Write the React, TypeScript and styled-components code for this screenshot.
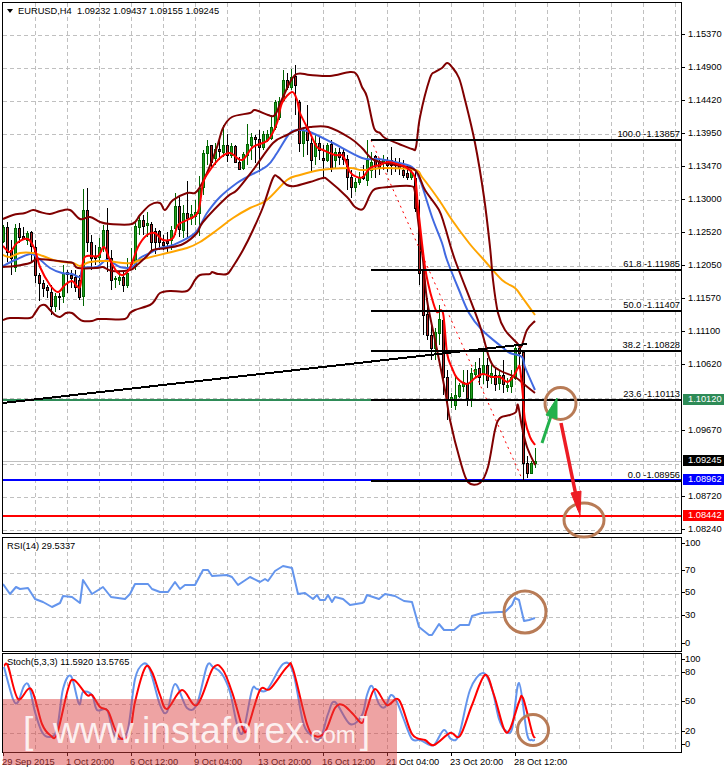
import React from "react";
import styled, { createGlobalStyle } from "styled-components";

type Pt = [number, number];
// x, high, low, body top, body bottom, bull
type Candle = [number, number, number, number, number, number];

const GlobalStyle = createGlobalStyle`
    html, body {
        margin: 0;
        padding: 0;
        background: #fff;
    }
    body {
        font-family: "Liberation Sans", Arial, sans-serif;
        font-size: 9.3px;
        color: #000;
    }
`;

const Page = styled.div`
    position: relative;
    width: 724px;
    height: 768px;
    padding: 2px 0 0 2px;
    box-sizing: border-box;
    overflow: hidden;
    background: #fff;
`;

const PaneRow = styled.div<{ $gap?: number }>`
    display: flex;
    margin-top: ${(p) => p.$gap ?? 0}px;
`;

const Pane = styled.div<{ $h: number }>`
    position: relative;
    width: 678px;
    height: ${(p) => p.$h}px;
    border: 1px solid #000;
    flex: none;
`;

const Plot = styled.svg`
    display: block;
    width: 100%;
    height: 100%;
`;

const Axis = styled.div`
    display: flex;
    flex-direction: column;
    flex: none;
`;

const Tick = styled.div<{ $gap: number; $tight?: boolean }>`
    display: flex;
    align-items: center;
    gap: ${(p) => (p.$tight ? 0 : 3)}px;
    height: 13px;
    margin-top: ${(p) => p.$gap}px;
    line-height: 13px;
    &::before {
        content: "";
        width: 3px;
        height: 1px;
        background: #000;
    }
`;

const Legend = styled.div`
    position: absolute;
    top: 1px;
    left: 4px;
    display: flex;
    align-items: center;
    gap: 4px;
    height: 13px;
    white-space: pre;
`;

const Caret = styled.span`
    width: 0;
    height: 0;
    border-left: 3.5px solid transparent;
    border-right: 3.5px solid transparent;
    border-top: 4px solid #000;
    margin-right: 1px;
`;

const PaneLabel = styled.div`
    position: absolute;
    top: 3px;
    left: 4px;
    white-space: pre;
`;

const FibLabel = styled.div<{ $y: number }>`
    position: absolute;
    right: 1px;
    top: ${(p) => p.$y - 3 - 11}px;
    line-height: 11px;
    white-space: pre;
`;

const PriceTag = styled.div<{ $y: number; $bg: string }>`
    position: absolute;
    left: 683px;
    top: ${(p) => p.$y - 6}px;
    width: 41px;
    height: 11px;
    padding-left: 5px;
    box-sizing: border-box;
    line-height: 11px;
    color: #fff;
    background: ${(p) => p.$bg};
`;

const TimeAxis = styled.div`
    display: flex;
`;

const TimeCell = styled.div`
    position: relative;
    width: 64px;
    flex: none;
    padding-top: 3px;
    line-height: 13px;
    white-space: pre;
    &::before {
        content: "";
        position: absolute;
        top: 0;
        left: 1px;
        width: 1px;
        height: 3px;
        background: #000;
    }
`;

const Overlay = styled.svg`
    position: absolute;
    top: 0;
    left: 0;
    width: 724px;
    height: 768px;
    pointer-events: none;
`;

const Watermark = styled.div`
    position: absolute;
    left: 3px;
    top: 699px;
    width: 394px;
    height: 66px;
    padding-left: 20px;
    box-sizing: border-box;
    display: flex;
    align-items: baseline;
    line-height: 62px;
    color: rgba(255, 255, 255, 0.85);
    background: rgba(219, 62, 62, 0.48);
    white-space: pre;
`;

const MarkText = styled.span<{ $size: number; $after?: number }>`
    font-size: ${(p) => p.$size}px;
    margin-right: ${(p) => p.$after ?? 0}px;
`;

const verticals = Array.from({ length: 21 }, (_, i) => 35 + 32 * i);
const mainRows = Array.from({ length: 16 }, (_, i) => 35 + 33 * i);

const candles: Candle[] = [
    [3, 225, 243, 227, 241, 1], [7, 222, 262, 227, 252, 0], [11, 240, 275, 250, 258, 0], [15, 224, 272, 228, 267, 1],
    [19, 223, 243, 228, 237, 0], [23, 227, 240, 236, 238, 0], [27, 231, 245, 233, 240, 1], [31, 231, 262, 232, 246, 0],
    [35, 240, 283, 247, 275, 0], [39, 273, 301, 275, 283, 0], [43, 280, 297, 283, 288, 0], [47, 285, 298, 287, 290, 0],
    [51, 285, 315, 292, 306, 0], [55, 293, 312, 296, 306, 1], [59, 293, 310, 296, 297, 0], [63, 265, 303, 273, 296, 1],
    [67, 270, 293, 272, 274, 0], [71, 270, 288, 275, 278, 0], [75, 270, 292, 277, 287, 0], [79, 275, 300, 280, 297, 0],
    [83, 189, 306, 210, 296, 1], [87, 188, 252, 210, 242, 0], [91, 235, 270, 242, 258, 0], [95, 245, 265, 256, 258, 0],
    [99, 238, 263, 247, 257, 1], [103, 225, 252, 230, 247, 1], [107, 208, 272, 230, 258, 0], [111, 250, 290, 258, 280, 0],
    [115, 276, 288, 278, 279, 1], [119, 272, 285, 277, 280, 1], [123, 272, 292, 277, 285, 0], [127, 258, 288, 273, 285, 1],
    [131, 248, 268, 262, 264, 1], [135, 222, 270, 226, 266, 1], [139, 215, 235, 220, 227, 1], [143, 215, 235, 220, 226, 0],
    [147, 212, 237, 223, 225, 1], [151, 222, 252, 224, 242, 0], [155, 228, 254, 231, 242, 0], [159, 230, 250, 231, 242, 0],
    [163, 235, 250, 242, 245, 0], [167, 232, 252, 241, 243, 0], [171, 226, 250, 230, 240, 1], [175, 193, 235, 206, 228, 1],
    [179, 196, 237, 206, 229, 0], [183, 205, 238, 213, 230, 1], [187, 181, 238, 213, 218, 0], [191, 205, 225, 214, 218, 1],
    [195, 200, 225, 212, 216, 1], [199, 176, 236, 188, 213, 1], [203, 150, 195, 153, 187, 1], [207, 140, 165, 146, 153, 1],
    [211, 145, 168, 145, 162, 0], [215, 143, 165, 149, 158, 1], [219, 140, 160, 149, 151, 0], [223, 125, 157, 145, 152, 1],
    [227, 134, 162, 145, 155, 0], [231, 143, 158, 146, 155, 1], [235, 145, 163, 146, 162, 0], [239, 157, 170, 162, 169, 0],
    [243, 152, 170, 154, 168, 1], [247, 124, 165, 144, 155, 1], [251, 133, 160, 137, 145, 1], [255, 135, 163, 137, 139, 0],
    [259, 130, 172, 139, 147, 0], [263, 131, 150, 134, 147, 1], [267, 130, 142, 134, 140, 1], [271, 115, 140, 127, 138, 1],
    [275, 100, 130, 102, 127, 1], [279, 97, 120, 101, 117, 1], [283, 70, 102, 80, 100, 1], [287, 73, 90, 80, 87, 0],
    [291, 69, 90, 77, 87, 1], [295, 65, 115, 76, 85, 0], [299, 100, 152, 102, 143, 0], [303, 128, 157, 130, 143, 1],
    [307, 105, 155, 128, 140, 0], [311, 138, 172, 143, 160, 0], [315, 135, 165, 143, 156, 1], [319, 137, 160, 143, 150, 0],
    [323, 145, 178, 158, 160, 0], [327, 143, 162, 145, 160, 1], [331, 140, 172, 144, 168, 0], [335, 148, 168, 152, 160, 1],
    [339, 148, 165, 152, 157, 0], [343, 148, 165, 152, 159, 0], [347, 155, 190, 159, 177, 0], [351, 170, 198, 177, 187, 0],
    [355, 178, 192, 182, 187, 1], [359, 172, 185, 177, 182, 1], [363, 165, 180, 176, 178, 0], [367, 140, 186, 160, 180, 1],
    [371, 152, 178, 162, 170, 1], [375, 155, 178, 156, 165, 0], [379, 158, 175, 161, 167, 0], [383, 155, 170, 159, 163, 1],
    [387, 157, 172, 160, 165, 0], [391, 147, 175, 160, 165, 0], [395, 158, 172, 162, 165, 0], [399, 158, 175, 163, 168, 0],
    [403, 160, 178, 170, 175, 0], [407, 165, 180, 173, 177, 0], [411, 168, 180, 172, 177, 1], [415, 172, 212, 178, 208, 0],
    [419, 200, 285, 227, 273, 0], [423, 260, 335, 270, 315, 0], [427, 298, 340, 314, 335, 0], [431, 322, 360, 335, 348, 0],
    [435, 328, 360, 332, 348, 1], [439, 305, 345, 319, 333, 1], [443, 318, 395, 320, 377, 0], [447, 370, 420, 377, 399, 0],
    [451, 393, 408, 397, 399, 1], [455, 375, 410, 395, 405, 1], [459, 383, 398, 385, 396, 1], [463, 370, 392, 382, 386, 1],
    [467, 370, 406, 383, 398, 0], [471, 368, 407, 373, 398, 1], [475, 362, 378, 369, 374, 1], [479, 358, 385, 368, 377, 0],
    [483, 352, 384, 365, 373, 1], [487, 358, 388, 365, 380, 0], [491, 365, 384, 373, 377, 1], [495, 368, 391, 375, 384, 0],
    [499, 370, 390, 375, 383, 1], [503, 360, 393, 375, 384, 0], [507, 378, 392, 385, 387, 1], [511, 370, 393, 377, 386, 1],
    [515, 345, 380, 348, 378, 1], [519, 345, 365, 348, 353, 0], [523, 352, 480, 352, 463, 0], [527, 456, 478, 463, 473, 0],
    [531, 461, 474, 463, 473, 1], [535, 448, 468, 461, 463, 1],
];

const upperBand: Pt[] = [
    [3, 219], [13, 215], [25, 213], [33, 210], [40, 212], [50, 214], [60, 211], [70, 210], [80, 219], [90, 217], [100, 222],
    [110, 224], [132, 224], [140, 215], [150, 205], [160, 203], [165, 210], [173, 200], [187, 193], [195, 193], [200, 187],
    [207, 173], [217, 147], [223, 128], [232, 117], [250, 113], [255, 110], [268, 115], [275, 115], [283, 97], [295, 75],
    [310, 75], [330, 76], [350, 72], [357, 75], [362, 87], [367, 97], [374, 128], [380, 133], [385, 138], [399, 144], [412, 149],
    [416, 147], [420, 117], [430, 78], [435, 72], [442, 68], [447, 63], [452, 67], [459, 78], [465, 100], [475, 143],
    [484, 197], [490, 247], [493, 280], [498, 313], [505, 330], [517, 343], [521, 347], [527, 330], [535, 321],
];

const middleBand: Pt[] = [
    [3, 267], [15, 266], [30, 263], [37, 259], [50, 260], [67, 262], [73, 263], [78, 268], [97, 268], [103, 267], [112, 271],
    [130, 270], [137, 265], [147, 256], [153, 250], [167, 248], [183, 244], [197, 233], [203, 222], [227, 197], [237, 190],
    [253, 170], [273, 143], [287, 135], [297, 130], [310, 127], [328, 127], [350, 138], [362, 148], [374, 160], [395, 165],
    [415, 170], [425, 190], [439, 210], [445, 227], [455, 260], [479, 323], [490, 360], [499, 370], [515, 377], [525, 385],
    [535, 393],
];

const lowerBand: Pt[] = [
    [3, 320], [10, 318], [30, 318], [35, 313], [40, 306], [45, 305], [50, 310], [55, 315], [60, 317], [66, 313], [72, 313],
    [78, 318], [83, 321], [92, 321], [98, 319], [106, 319], [125, 319], [130, 313], [135, 310], [150, 305], [155, 300],
    [160, 293], [170, 291], [187, 291], [195, 280], [200, 275], [210, 274], [212, 272], [218, 274], [227, 274], [232, 268],
    [243, 250], [253, 230], [263, 207], [273, 178], [278, 177], [287, 185], [295, 186], [310, 182], [323, 178], [328, 180],
    [347, 197], [355, 207], [363, 209], [370, 195], [375, 189], [388, 187], [410, 186], [415, 192], [418, 220], [423, 260],
    [427, 300], [435, 340], [445, 390], [450, 420], [460, 460], [468, 482], [480, 483], [488, 467], [495, 430], [500, 418],
    [510, 415], [516, 412], [518, 405], [522, 427], [527, 447], [535, 465],
];

const blueMa: Pt[] = [
    [3, 266], [15, 260], [30, 254], [37, 257], [50, 268], [62, 273], [72, 274], [80, 277], [83, 268], [97, 267], [107, 260],
    [120, 267], [132, 267], [140, 258], [150, 253], [160, 248], [173, 245], [195, 233], [207, 213], [220, 197], [237, 183],
    [247, 177], [267, 166], [277, 153], [290, 133], [300, 130], [310, 132], [333, 143], [362, 158], [379, 159], [395, 162],
    [412, 167], [420, 180], [432, 217], [442, 243], [447, 260], [459, 290], [469, 313], [482, 330], [502, 347], [510, 353],
    [522, 357], [525, 367], [535, 390],
];

const orangeMa: Pt[] = [
    [3, 255], [10, 257], [20, 253], [33, 253], [43, 256], [57, 261], [73, 263], [80, 266], [90, 262], [107, 261], [123, 263],
    [133, 263], [140, 260], [167, 253], [187, 248], [200, 242], [217, 230], [233, 218], [250, 208], [267, 200], [287, 180],
    [300, 175], [320, 170], [350, 168], [362, 170], [385, 168], [415, 170], [422, 177], [439, 200], [452, 220], [469, 243],
    [484, 260], [502, 280], [515, 288], [522, 297], [535, 315],
];

const redMa: Pt[] = [
    [3, 246], [10, 252], [17, 243], [28, 239], [35, 250], [40, 267], [50, 285], [58, 292], [65, 285], [72, 281], [80, 287],
    [83, 262], [87, 256], [98, 256], [104, 247], [110, 260], [117, 272], [123, 275], [130, 268], [138, 247], [147, 235],
    [155, 233], [163, 240], [173, 238], [178, 225], [187, 220], [198, 212], [203, 183], [208, 173], [220, 158], [230, 153],
    [242, 160], [253, 147], [268, 140], [277, 123], [282, 103], [292, 92], [297, 100], [300, 113], [310, 133], [317, 147],
    [323, 150], [335, 155], [343, 156], [350, 172], [357, 177], [363, 177], [370, 168], [380, 165], [388, 162], [400, 165],
    [407, 168], [415, 178], [418, 207], [422, 243], [425, 267], [428, 283], [433, 302], [437, 312], [443, 313], [447, 353],
    [452, 368], [457, 378], [467, 384], [475, 378], [483, 374], [492, 377], [500, 377], [507, 382], [513, 377], [518, 368],
    [520, 368], [523, 397], [525, 420], [530, 437], [535, 445],
];

const rsiLine: Pt[] = [
    [3, 582], [10, 592], [16, 585], [20, 587], [28, 586], [35, 597], [43, 600], [52, 605], [60, 601], [63, 594], [72, 595],
    [80, 601], [83, 578], [92, 592], [103, 585], [111, 595], [125, 597], [130, 592], [135, 582], [148, 582], [152, 587],
    [160, 590], [168, 590], [175, 580], [180, 587], [185, 583], [195, 583], [203, 568], [208, 568], [212, 574], [227, 573],
    [232, 575], [238, 583], [250, 575], [260, 580], [265, 577], [268, 579], [275, 569], [283, 564], [292, 566], [298, 592],
    [305, 591], [313, 597], [317, 593], [320, 598], [325, 598], [328, 593], [332, 600], [335, 595], [343, 597], [350, 603],
    [362, 601], [364, 600], [367, 593], [379, 597], [385, 592], [395, 594], [404, 599], [412, 600], [419, 625], [429, 633],
    [432, 633], [439, 622], [444, 628], [454, 628], [460, 623], [469, 623], [472, 614], [482, 611], [499, 610], [505, 610],
    [512, 603], [515, 596], [519, 598], [524, 619], [529, 618], [535, 616],
];

const stochMain: Pt[] = [
    [4, 665], [13, 697], [18, 700], [24, 684], [29, 684], [35, 710], [42, 730], [50, 735], [57, 727], [63, 687], [71, 674],
    [79, 702], [83, 690], [92, 693], [97, 708], [107, 708], [113, 730], [120, 737], [128, 727], [135, 677], [143, 662],
    [150, 668], [160, 703], [167, 710], [175, 682], [187, 706], [197, 702], [207, 664], [213, 665], [222, 672], [230, 690],
    [237, 722], [243, 730], [252, 688], [257, 687], [267, 688], [283, 662], [293, 670], [303, 720], [310, 732], [320, 737],
    [328, 712], [335, 700], [350, 722], [362, 713], [367, 693], [372, 684], [379, 702], [385, 705], [391, 693], [397, 700],
    [404, 718], [412, 737], [420, 738], [430, 743], [435, 742], [444, 728], [451, 737], [459, 733], [470, 688], [483, 671],
    [492, 687], [499, 717], [505, 728], [512, 727], [519, 681], [527, 732], [532, 738], [535, 738],
];

const stochSignal: Pt[] = [
    [4, 664], [8, 664], [18, 697], [31, 687], [42, 722], [50, 733], [57, 732], [68, 687], [74, 678], [87, 693], [92, 693],
    [100, 705], [108, 709], [115, 727], [122, 737], [130, 730], [135, 700], [145, 666], [152, 670], [160, 693], [167, 707],
    [182, 688], [197, 703], [213, 666], [223, 668], [233, 693], [243, 727], [248, 725], [260, 688], [270, 687], [287, 665],
    [293, 667], [307, 722], [315, 734], [325, 730], [335, 706], [343, 703], [353, 712], [362, 721], [367, 707], [375, 687],
    [387, 703], [399, 698], [412, 732], [425, 738], [434, 743], [450, 731], [460, 734], [472, 703], [485, 673], [494, 693],
    [504, 727], [510, 727], [519, 700], [523, 696], [532, 730], [535, 736],
];

const fibLevels = [
    { y: 140, text: "100.0 -1.13857" },
    { y: 270, text: "61.8 -1.11985" },
    { y: 311, text: "50.0 -1.11407" },
    { y: 351, text: "38.2 -1.10828" },
    { y: 400, text: "23.6 -1.10113" },
    { y: 481, text: "0.0 -1.08956" },
];

const priceTicks = [
    { text: "1.15370", gap: 26 }, { text: "1.14900", gap: 20 }, { text: "1.14420", gap: 20 }, { text: "1.13950", gap: 20 },
    { text: "1.13470", gap: 20 }, { text: "1.13000", gap: 20 }, { text: "1.12520", gap: 20 }, { text: "1.12050", gap: 20 },
    { text: "1.11570", gap: 20 }, { text: "1.11100", gap: 20 }, { text: "1.10620", gap: 20 }, { text: "1.09670", gap: 53 },
    { text: "1.08720", gap: 53 }, { text: "1.08240", gap: 20 },
];

const rsiTicks = [
    { text: "100", gap: 0 }, { text: "70", gap: 14 }, { text: "50", gap: 9 }, { text: "30", gap: 10 }, { text: "0", gap: 15 },
];

const stochTicks = [
    { text: "100", gap: 0 }, { text: "80", gap: 0 }, { text: "50", gap: 16 }, { text: "20", gap: 17 }, { text: "0", gap: 0 },
];

const timeLabels = [
    "29 Sep 2015", "1 Oct 20:00", "6 Oct 12:00", "9 Oct 04:00", "13 Oct 20:00",
    "16 Oct 12:00", "21 Oct 04:00", "23 Oct 20:00", "28 Oct 12:00",
];

const toPoints = (pts: Pt[]) => pts.map(([x, y]) => `${x},${y}`).join(" ");

// catmull-rom through the points, the indicators are smooth curves
const smoothPath = (pts: Pt[]) => {
    let d = `M${pts[0][0]} ${pts[0][1]}`;
    for (let i = 0; i < pts.length - 1; i++) {
        const p0 = pts[Math.max(i - 1, 0)];
        const p1 = pts[i];
        const p2 = pts[i + 1];
        const p3 = pts[Math.min(i + 2, pts.length - 1)];
        const c1x = p1[0] + (p2[0] - p0[0]) / 6;
        const c1y = p1[1] + (p2[1] - p0[1]) / 6;
        const c2x = p2[0] - (p3[0] - p1[0]) / 6;
        const c2y = p2[1] - (p3[1] - p1[1]) / 6;
        d += ` C${c1x.toFixed(1)} ${c1y.toFixed(1)} ${c2x.toFixed(1)} ${c2y.toFixed(1)} ${p2[0]} ${p2[1]}`;
    }
    return d;
};

const Series: React.FC<{ pts: Pt[]; color: string }> = ({ pts, color }) => (
    <path d={smoothPath(pts)} fill="none" stroke={color} strokeWidth={2} strokeLinejoin="round" />
);

const Grid: React.FC<{ rows: number[]; top: number; bottom: number }> = ({ rows, top, bottom }) => (
    <g stroke="#c0c0c0" strokeWidth={1} strokeDasharray="4 3" shapeRendering="crispEdges">
        {verticals.map((x) => (
            <line key={x} x1={x + 0.5} x2={x + 0.5} y1={top} y2={bottom} />
        ))}
        {rows.map((y) => (
            <line key={y} x1={3} x2={681} y1={y + 0.5} y2={y + 0.5} />
        ))}
    </g>
);

const CandleMark: React.FC<{ c: Candle }> = ({ c: [x, hi, lo, top, bot, bull] }) => (
    <g shapeRendering="crispEdges">
        <line x1={x + 0.5} x2={x + 0.5} y1={hi} y2={lo} stroke={bull ? "#006400" : "#000"} />
        <rect
            x={x - 0.5}
            y={top + 0.5}
            width={2}
            height={bot - top}
            fill={bull ? "#22a022" : "#b22222"}
            stroke={bull ? "#006400" : "#000"}
        />
    </g>
);

const App: React.FC = () => (
    <Page>
        <GlobalStyle />
        <PaneRow>
            <Pane $h={530}>
                <Plot viewBox="3 3 678 530">
                    <Grid rows={mainRows} top={3} bottom={533} />
                    <line x1={3} x2={681} y1={461.5} y2={461.5} stroke="#c0c0c0" strokeWidth={1} />
                    <line x1={3} x2={681} y1={400} y2={400} stroke="#2e8b57" strokeWidth={2} />
                    <line x1={3} x2={681} y1={480} y2={480} stroke="#0000ff" strokeWidth={2} />
                    <line x1={3} x2={681} y1={516} y2={516} stroke="#ff0000" strokeWidth={2} />
                    {candles.map((c) => (
                        <CandleMark key={c[0]} c={c} />
                    ))}
                    <Series pts={blueMa} color="#4169e1" />
                    <Series pts={orangeMa} color="#ffa500" />
                    <Series pts={upperBand} color="#800000" />
                    <Series pts={middleBand} color="#800000" />
                    <Series pts={lowerBand} color="#800000" />
                    <Series pts={redMa} color="#ff0000" />
                    <line x1={371} y1={140} x2={523} y2={481} stroke="#ff0000" strokeWidth={1} strokeDasharray="2 4" />
                    <line x1={3} y1={403} x2={527} y2={344} stroke="#000" strokeWidth={2} shapeRendering="crispEdges" />
                    {fibLevels.map((f) => (
                        <line key={f.y} x1={371} x2={681} y1={f.y} y2={f.y} stroke="#000" strokeWidth={2} />
                    ))}
                </Plot>
                <Legend>
                    <Caret />
                    <span>{"EURUSD,H4  1.09232 1.09437 1.09155 1.09245"}</span>
                </Legend>
                {fibLevels.map((f) => (
                    <FibLabel key={f.y} $y={f.y}>
                        {f.text}
                    </FibLabel>
                ))}
            </Pane>
            <Axis>
                {priceTicks.map((t) => (
                    <Tick key={t.text} $gap={t.gap}>
                        {t.text}
                    </Tick>
                ))}
            </Axis>
        </PaneRow>
        <PaneRow $gap={1}>
            <Pane $h={113}>
                <Plot viewBox="3 536 678 113">
                    <Grid rows={[571, 592, 615]} top={536} bottom={649} />
                    <polyline points={toPoints(rsiLine)} fill="none" stroke="#6495ed" strokeWidth={2} strokeLinejoin="round" />
                </Plot>
                <PaneLabel>RSI(14) 29.5337</PaneLabel>
            </Pane>
            <Axis>
                {rsiTicks.map((t) => (
                    <Tick key={t.text} $gap={t.gap} $tight>
                        {t.text}
                    </Tick>
                ))}
            </Axis>
        </PaneRow>
        <PaneRow $gap={1}>
            <Pane $h={98}>
                <Plot viewBox="3 652 678 98">
                    <Grid rows={[673, 702, 731]} top={652} bottom={750} />
                    <Series pts={stochMain} color="#6495ed" />
                    <Series pts={stochSignal} color="#ff0000" />
                </Plot>
                <PaneLabel>Stoch(5,3,3) 11.5920 13.5765</PaneLabel>
            </Pane>
            <Axis>
                {stochTicks.map((t) => (
                    <Tick key={t.text} $gap={t.gap} $tight>
                        {t.text}
                    </Tick>
                ))}
            </Axis>
        </PaneRow>
        <TimeAxis>
            {timeLabels.map((t) => (
                <TimeCell key={t}>{t}</TimeCell>
            ))}
        </TimeAxis>
        <PriceTag $y={400} $bg="#2e8b57">1.10120</PriceTag>
        <PriceTag $y={461} $bg="#000">1.09245</PriceTag>
        <PriceTag $y={480} $bg="#0000ff">1.08962</PriceTag>
        <PriceTag $y={516} $bg="#ff0000">1.08442</PriceTag>
        <Watermark>
            <MarkText $size={37.3} $after={19.6}>[</MarkText>
            <MarkText $size={37.3}>www.instaforex</MarkText>
            <MarkText $size={24} $after={4}>.com</MarkText>
            <MarkText $size={37.3}>]</MarkText>
        </Watermark>
        <Overlay viewBox="0 0 724 768">
            <g fill="none" stroke="#b87b56" strokeWidth={3}>
                <ellipse cx={560.5} cy={403.5} rx={15.5} ry={16} />
                <ellipse cx={584} cy={520} rx={20} ry={17} />
                <circle cx={525} cy={612} r={21} />
                <circle cx={533} cy={730} r={15.5} />
            </g>
            <g fill="#22b14c" stroke="#22b14c">
                <line x1={542} y1={443} x2={555} y2={404} strokeWidth={3} />
                <polygon points="557,398 546,415 557,419" strokeWidth={1} />
            </g>
            <g fill="#ed1c24" stroke="#ed1c24">
                <line x1={561} y1={423} x2={579} y2={510} strokeWidth={3.5} />
                <polygon points="580,515 571,493 581,491" strokeWidth={1} />
            </g>
        </Overlay>
    </Page>
);

export default App;
